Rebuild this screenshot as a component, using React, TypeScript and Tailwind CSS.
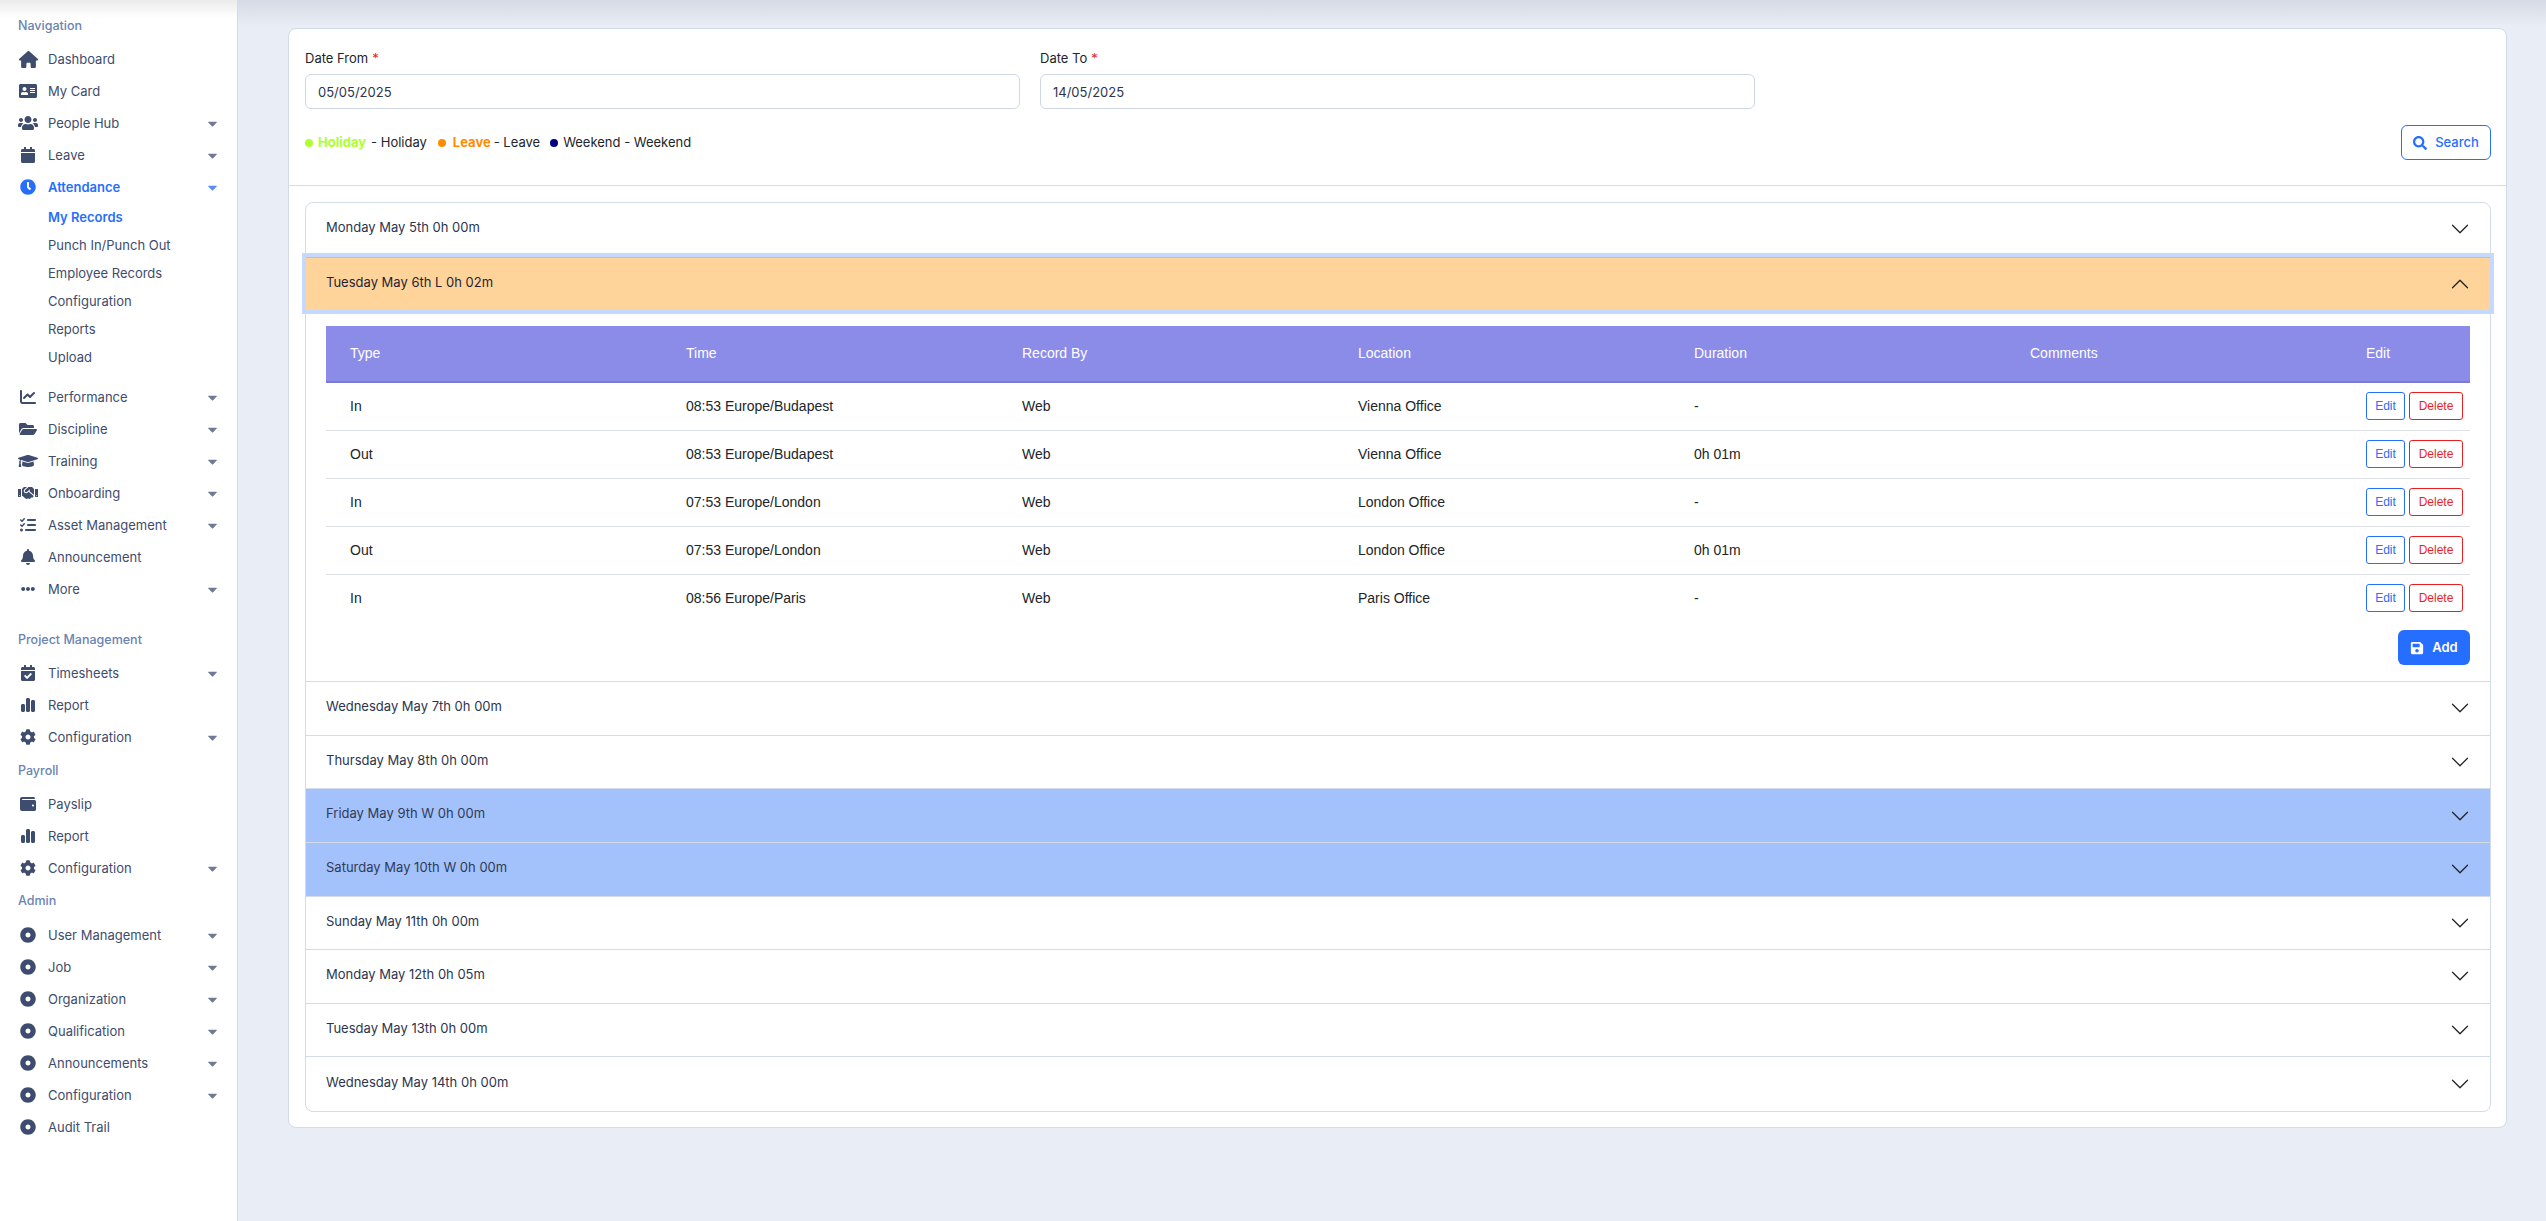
import type { ReactNode } from "react";
import { IconType } from "react-icons";
import {
  FaAddressCard,
  FaBell,
  FaCalendar,
  FaCalendarCheck,
  FaCaretDown,
  FaClock,
  FaCog,
  FaDotCircle,
  FaEllipsisH,
  FaFolderOpen,
  FaGraduationCap,
  FaHandshake,
  FaSave,
  FaSearch,
  FaUsers,
  FaWallet,
} from "react-icons/fa";
import { FaChartLine, FaChartSimple, FaHouse, FaListCheck } from "react-icons/fa6";

const UI_FONT = "font-['Inter','Noto_Sans',sans-serif]";
const TABLE_FONT = "font-['Liberation_Sans',Arial,sans-serif]";

// react-icons squeezes every glyph into a 1em square, so wide ones need a bigger size
type NavEntry = { label: string; icon: IconType; size?: number; caret?: boolean; active?: boolean };

const NAV_MAIN: NavEntry[] = [
  { label: "Dashboard", icon: FaHouse, size: 19 },
  { label: "My Card", icon: FaAddressCard, size: 18 },
  { label: "People Hub", icon: FaUsers, size: 20, caret: true },
  { label: "Leave", icon: FaCalendar, caret: true },
  { label: "Attendance", icon: FaClock, caret: true, active: true },
];
const ATTENDANCE_SUB = ["My Records", "Punch In/Punch Out", "Employee Records", "Configuration", "Reports", "Upload"];
const NAV_MAIN_2: NavEntry[] = [
  { label: "Performance", icon: FaChartLine, caret: true },
  { label: "Discipline", icon: FaFolderOpen, size: 18, caret: true },
  { label: "Training", icon: FaGraduationCap, size: 20, caret: true },
  { label: "Onboarding", icon: FaHandshake, size: 20, caret: true },
  { label: "Asset Management", icon: FaListCheck, caret: true },
  { label: "Announcement", icon: FaBell },
  { label: "More", icon: FaEllipsisH, size: 14, caret: true },
];
const NAV_PROJECT: NavEntry[] = [
  { label: "Timesheets", icon: FaCalendarCheck, caret: true },
  { label: "Report", icon: FaChartSimple },
  { label: "Configuration", icon: FaCog, caret: true },
];
const NAV_PAYROLL: NavEntry[] = [
  { label: "Payslip", icon: FaWallet },
  { label: "Report", icon: FaChartSimple },
  { label: "Configuration", icon: FaCog, caret: true },
];
const NAV_ADMIN: NavEntry[] = [
  { label: "User Management", icon: FaDotCircle, caret: true },
  { label: "Job", icon: FaDotCircle, caret: true },
  { label: "Organization", icon: FaDotCircle, caret: true },
  { label: "Qualification", icon: FaDotCircle, caret: true },
  { label: "Announcements", icon: FaDotCircle, caret: true },
  { label: "Configuration", icon: FaDotCircle, caret: true },
  { label: "Audit Trail", icon: FaDotCircle },
];

const RECORDS = [
  { type: "In", time: "08:53 Europe/Budapest", by: "Web", location: "Vienna Office", duration: "-" },
  { type: "Out", time: "08:53 Europe/Budapest", by: "Web", location: "Vienna Office", duration: "0h 01m" },
  { type: "In", time: "07:53 Europe/London", by: "Web", location: "London Office", duration: "-" },
  { type: "Out", time: "07:53 Europe/London", by: "Web", location: "London Office", duration: "0h 01m" },
  { type: "In", time: "08:56 Europe/Paris", by: "Web", location: "Paris Office", duration: "-" },
];

const DAYS_AFTER = [
  { label: "Wednesday May 7th 0h 00m" },
  { label: "Thursday May 8th 0h 00m" },
  { label: "Friday May 9th W 0h 00m", weekend: true },
  { label: "Saturday May 10th W 0h 00m", weekend: true },
  { label: "Sunday May 11th 0h 00m" },
  { label: "Monday May 12th 0h 05m" },
  { label: "Tuesday May 13th 0h 00m" },
  { label: "Wednesday May 14th 0h 00m" },
];

function NavRow({ item }: { item: NavEntry }) {
  const Icon = item.icon;
  return (
    <div className={`flex h-8 items-center pl-[18px] pr-[17px] ${item.active ? "text-[#266eff]" : "text-[#3e4c6e]"}`}>
      <span className="flex w-[20px] justify-center">
        <Icon size={item.size ?? 16} />
      </span>
      <span className={`ml-[10px] mt-[2px] flex-1 text-[13px] ${item.active ? "font-semibold" : ""}`}>{item.label}</span>
      {item.caret && <FaCaretDown className={`text-[15px] ${item.active ? "text-[#5c8cf5]" : "text-[#6f7a94]"}`} />}
    </div>
  );
}

function NavGroup({ title, items, className }: { title: string; items: NavEntry[]; className: string }) {
  return (
    <div className={className}>
      <SectionLabel title={title} />
      {items.map((item) => (
        <NavRow key={item.label} item={item} />
      ))}
    </div>
  );
}

function SectionLabel({ title }: { title: string }) {
  return <div className="flex h-[18px] items-center pl-[18px] text-[12.5px] font-medium text-[#6a83b3]">{title}</div>;
}

function Chevron({ up }: { up?: boolean }) {
  return (
    <svg viewBox="0 0 16 16" className="h-5 w-5 text-[#212529]" fill="currentColor">
      {up ? (
        <path fillRule="evenodd" d="M7.646 4.646a.5.5 0 0 1 .708 0l6 6a.5.5 0 0 1-.708.708L8 5.707l-5.646 5.647a.5.5 0 0 1-.708-.708l6-6z" />
      ) : (
        <path fillRule="evenodd" d="M1.646 4.646a.5.5 0 0 1 .708 0L8 10.293l5.646-5.647a.5.5 0 0 1 .708.708l-6 6a.5.5 0 0 1-.708 0l-6-6a.5.5 0 0 1 0-.708z" />
      )}
    </svg>
  );
}

function DayRow({ label, weekend, last }: { label: string; weekend?: boolean; last?: boolean }) {
  return (
    <div
      className={`flex h-[53.6px] items-center justify-between px-[20px] text-[13px] ${
        weekend ? "bg-[#a3c1fb] text-[#2f3b57]" : "text-[#2b3550]"
      } ${last ? "" : "border-b border-[#d3dbe8]"}`}
    >
      <span className="mb-[3px]">{label}</span>
      <Chevron />
    </div>
  );
}

function Th({ children }: { children: ReactNode }) {
  return <th className="px-[24px] text-left text-[14px] font-normal">{children}</th>;
}

function Td({ children }: { children: ReactNode }) {
  return <td className="px-[24px] text-[14px]">{children}</td>;
}

function LegendDot({ className }: { className: string }) {
  return <span className={`inline-block h-2 w-2 rounded-full ${className}`} />;
}

function Field({ label, value }: { label: string; value: string }) {
  return (
    <div>
      <div className="flex h-[18px] items-center pt-[1px] text-[13px] text-[#212529]">
        {label}
        <span className="ml-1 text-[#e81f1f]">*</span>
      </div>
      <div className="mt-[7px] flex h-[35px] items-center rounded-[6px] border border-[#cfd8e6] bg-white px-[12px] pt-[2px] text-[13px] text-[#2b3550]">
        {value}
      </div>
    </div>
  );
}

export default function App() {
  return (
    <div className={`flex h-[1221px] overflow-hidden bg-[#e9edf5] ${UI_FONT}`}>
      <aside className="relative w-[238px] shrink-0 border-r border-[#d3dbe8] bg-white pt-[17px]">
        <div className="absolute inset-x-0 top-0 h-[18px] bg-gradient-to-b from-[#ebebeb] to-transparent" />
        <SectionLabel title="Navigation" />
        <div className="mt-[8px]">
          {NAV_MAIN.map((item) => (
            <NavRow key={item.label} item={item} />
          ))}
        </div>
        <div className="mb-[10px]">
          {ATTENDANCE_SUB.map((label, i) => (
            <div
              key={label}
              className={`flex h-[28px] items-center pl-[48px] pt-[2px] text-[13px] ${i === 0 ? "font-semibold text-[#266eff]" : "text-[#3e4c6e]"}`}
            >
              {label}
            </div>
          ))}
        </div>
        {NAV_MAIN_2.map((item) => (
          <NavRow key={item.label} item={item} />
        ))}
        <NavGroup title="Project Management" items={NAV_PROJECT} className="mt-[26px] [&>div:first-child]:mb-[8px]" />
        <NavGroup title="Payroll" items={NAV_PAYROLL} className="mt-[9px] [&>div:first-child]:mb-[8px]" />
        <NavGroup title="Admin" items={NAV_ADMIN} className="mt-[8px] [&>div:first-child]:mb-[9px]" />
      </aside>

      <main className="relative flex-1 pl-[50px] pt-[28px]">
        <div className="absolute inset-x-0 top-0 h-[26px] bg-gradient-to-b from-[#d6dae4] to-transparent" />
        <div className="relative h-[1100px] w-[2219px] rounded-[8px] border border-[#d3dbe8] bg-white">
          <div className="h-[157px] border-b border-[#d3dbe8] pl-[16px] pr-[15px] pt-[20px]">
            <div className="grid grid-cols-[715px_715px] gap-x-[20px]">
              <Field label="Date From" value="05/05/2025" />
              <Field label="Date To" value="14/05/2025" />
            </div>
            <div className="mt-[16px] flex h-[35px] items-center justify-between">
              <div className="flex h-[18px] items-center pt-[1px] text-[13px] text-[#212529]">
                <LegendDot className="mr-[5px] bg-[#adff2f]" />
                <span className="font-bold text-[#adff2f]">Holiday</span>
                <span className="ml-[5px]">- Holiday</span>
                <LegendDot className="ml-[11px] mr-[7px] bg-[#ff8c00]" />
                <span className="font-bold text-[#ff8c00]">Leave</span>
                <span className="ml-[3px]">- Leave</span>
                <LegendDot className="ml-[10px] mr-[5px] bg-[#000080]" />
                <span>Weekend - Weekend</span>
              </div>
              <button className="flex h-[35px] w-[90px] items-center justify-center gap-[8px] rounded-[6px] border border-[#266eff] text-[13px] font-medium text-[#266eff]">
                <FaSearch className="text-[14px]" />
                Search
              </button>
            </div>
          </div>

          <div className="ml-[16px] mr-[15px] mt-[16px] rounded-[8px] border border-[#d3dbe8]">
            <DayRow label="Monday May 5th 0h 00m" />
            <div className="relative flex h-[53.6px] items-center justify-between border-t border-[#a9c3f7] bg-[#fed49b] px-[20px] text-[13px] text-[#1f2433] shadow-[0_0_0_4px_#c5d8fd]">
              <span className="mb-[3px]">Tuesday May 6th L 0h 02m</span>
              <Chevron up />
            </div>
            <div className="border-b border-[#d3dbe8] px-[20px] pb-[16px] pt-[16px]">
              <table className={`w-[2144px] table-fixed border-collapse ${TABLE_FONT}`}>
                <thead>
                  <tr className="h-[56px] border-b-2 border-[#7a7ad6] bg-[#8b8be8] text-white">
                    <Th>Type</Th>
                    <Th>Time</Th>
                    <Th>Record By</Th>
                    <Th>Location</Th>
                    <Th>Duration</Th>
                    <Th>Comments</Th>
                    <th className="w-[128px] pl-[24px] text-left text-[14px] font-normal">Edit</th>
                  </tr>
                </thead>
                <tbody className="text-[#212529]">
                  {RECORDS.map((r, i) => (
                    <tr key={i} className={`h-[48px] ${i < RECORDS.length - 1 ? "border-b border-[#dee2e6]" : ""}`}>
                      <Td>{r.type}</Td>
                      <Td>{r.time}</Td>
                      <Td>{r.by}</Td>
                      <Td>{r.location}</Td>
                      <Td>{r.duration}</Td>
                      <Td> </Td>
                      <td>
                        <div className="flex justify-end gap-[4px] pr-[7px] text-[12px]">
                          <button className="h-[28px] w-[39px] rounded-[3px] border border-[#266eff] text-[#266eff]">Edit</button>
                          <button className="h-[28px] w-[54px] rounded-[3px] border border-[#e81f1f] text-[#e81f1f]">Delete</button>
                        </div>
                      </td>
                    </tr>
                  ))}
                </tbody>
              </table>
              <div className="mt-[8px] flex justify-end">
                <button className="flex h-[35px] w-[72px] items-center justify-center gap-[8px] rounded-[6px] bg-[#266eff] text-[13px] font-semibold text-white">
                  <FaSave className="text-[14px]" />
                  Add
                </button>
              </div>
            </div>
            {DAYS_AFTER.map((d, i) => (
              <DayRow key={d.label} label={d.label} weekend={d.weekend} last={i === DAYS_AFTER.length - 1} />
            ))}
          </div>
        </div>
      </main>
    </div>
  );
}
